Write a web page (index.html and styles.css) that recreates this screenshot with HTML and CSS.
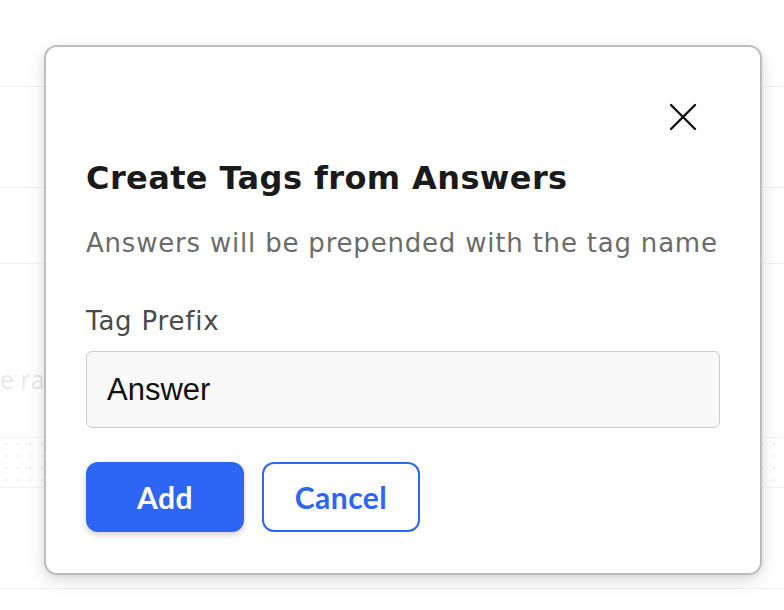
FILE: index.html
```html
<!DOCTYPE html>
<html lang="en">
<head>
<meta charset="utf-8">
<title>Create Tags from Answers</title>
<link rel="stylesheet" href="styles.css">
</head>
<body>
<div class="page">
  <div class="bg-row r1"></div>
  <div class="bg-row r2"></div>
  <div class="bg-row r3"></div>
  <div class="bg-row r4"><span class="ghost">e rating</span></div>
  <div class="bg-row r5 dotted"></div>
  <div class="bg-row r6"></div>
  <div class="bg-row r7"></div>
</div>

<div class="modal" role="dialog" aria-labelledby="modal-title">
  <div class="modal-head">
    <button class="close" aria-label="Close">
      <svg width="28" height="28" viewBox="0 0 28 28" fill="none" stroke="#111" stroke-width="2.4" stroke-linecap="round">
        <path d="M2 2 L26 26 M26 2 L2 26"/>
      </svg>
    </button>
  </div>
  <h2 id="modal-title" class="title">Create Tags from Answers</h2>
  <p class="subtitle">Answers will be prepended with the tag name</p>
  <label class="label" for="prefix">Tag Prefix</label>
  <input id="prefix" class="input" type="text" value="Answer">
  <div class="actions">
    <button class="btn btn-primary">Add</button>
    <button class="btn btn-outline">Cancel</button>
  </div>
</div>
</body>
</html>
```

FILE: styles.css
```css
* { box-sizing: border-box; }

html, body {
  margin: 0;
  padding: 0;
  background: #ffffff;
  width: 784px;
  height: 610px;
  overflow: hidden;
  font-family: "DejaVu Sans", "Noto Sans", sans-serif;
}

.page {
  display: flex;
  flex-direction: column;
}

.bg-row {
  border-bottom: 1px solid #eef1f5;
}
.r1 { height: 87px; }
.r2 { height: 101px; }
.r3 { height: 76px; }
.r4 {
  height: 174px;
  display: flex;
  align-items: flex-start;
  padding-top: 98px;
}
.r5 { height: 50px; }
.r6 { height: 101px; }
.r7 { height: 22px; border-bottom: none; }

.ghost {
  font-family: "Open Sans", sans-serif;
  font-size: 25px;
  line-height: 34px;
  color: #e8e8e8;
}

.dotted {
  background-image: radial-gradient(circle, #ececec 1.1px, transparent 1.4px);
  background-size: 12px 12px;
  background-position: 0 0;
}

.modal {
  position: absolute;
  left: 44px;
  top: 45px;
  width: 718px;
  height: 530px;
  background: #ffffff;
  border: 2px solid #bdbdbd;
  border-radius: 13px;
  box-shadow: 0 6px 18px rgba(0, 0, 0, 0.12), 0 2px 6px rgba(0, 0, 0, 0.06);
  padding: 56px 40px 40px 40px;
  display: flex;
  flex-direction: column;
}

.modal-head {
  display: flex;
  justify-content: flex-end;
  padding-right: 23px;
}

.close {
  width: 28px;
  height: 28px;
  padding: 0;
  border: none;
  background: none;
  display: block;
}
.close svg { display: block; }

.title {
  margin: 27px 0 0 0;
  font-size: 32px;
  line-height: 40px;
  font-weight: 700;
  letter-spacing: 0.4px;
  color: #1a1a1a;
  white-space: nowrap;
}

.subtitle {
  margin: 29px 0 0 0;
  font-size: 26px;
  line-height: 32px;
  letter-spacing: 0.8px;
  color: #6b6b6b;
  font-weight: 400;
  white-space: nowrap;
}

.label {
  margin-top: 46px;
  font-size: 26px;
  line-height: 32px;
  letter-spacing: 0.8px;
  color: #4a4a4a;
  display: block;
}

.input {
  margin-top: 14px;
  width: 634px;
  height: 77px;
  background: #f8f8f8;
  border: 1.5px solid #cccccc;
  border-radius: 6px;
  padding: 0 20px;
  font-family: "Liberation Sans", Arial, sans-serif;
  font-size: 31px;
  color: #111111;
  outline: none;
}

.actions {
  margin-top: 34px;
  display: flex;
  gap: 18px;
}

.btn {
  width: 158px;
  height: 70px;
  border-radius: 12px;
  font-family: "Lato", sans-serif;
  font-size: 30px;
  font-weight: 700;
  letter-spacing: 0.5px;
  cursor: pointer;
}

.btn-primary {
  background: #2d66f5;
  color: #ffffff;
  border: none;
  box-shadow: 0 3px 6px rgba(0, 0, 0, 0.18);
}

.btn-outline {
  background: #ffffff;
  color: #2d66f5;
  border: 2px solid #2d66f5;
}
```
